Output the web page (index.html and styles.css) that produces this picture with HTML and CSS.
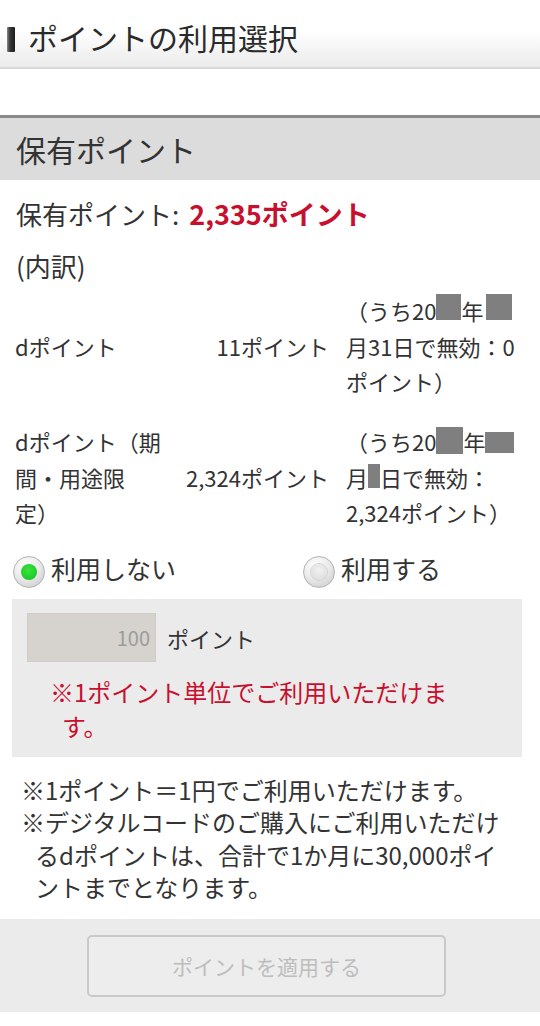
FILE: index.html
```html
<!DOCTYPE html>
<html lang="ja">
<head>
<meta charset="utf-8">
<title>ポイントの利用選択</title>
<link rel="stylesheet" href="styles.css">
</head>
<body>
<header class="hdr">
  <span class="hdr-bar"></span>
  <h1 class="hdr-title">ポイントの利用選択</h1>
</header>
<div class="spacer"></div>
<h2 class="sec-title">保有ポイント</h2>
<p class="total">保有ポイント:<span class="total-num">2,335ポイント</span></p>
<p class="breakdown">(内訳)</p>
<div class="ptable">
  <div class="prow">
    <div class="pname">dポイント</div>
    <div class="pval">11ポイント</div>
    <div class="pnote">（うち20<span class="mask m-a"></span>年<span class="mask m-b"></span>月31日で無効：0ポイント）</div>
  </div>
  <div class="prow">
    <div class="pname">dポイント（期間・用途限定）</div>
    <div class="pval">2,324ポイント</div>
    <div class="pnote">（うち20<span class="mask m-c"></span>年<span class="mask m-d"></span>月<span class="mask m-e"></span>日で無効：2,324ポイント）</div>
  </div>
</div>
<div class="radios">
  <label class="radio-opt"><span class="radio radio-on"></span><span class="radio-text">利用しない</span></label>
  <label class="radio-opt"><span class="radio radio-off"></span><span class="radio-text">利用する</span></label>
</div>
<div class="usebox">
  <div class="use-row">
    <span class="use-input">100</span>
    <span class="use-unit">ポイント</span>
  </div>
  <p class="use-note">※1ポイント単位でご利用いただけます。</p>
</div>
<div class="notes">
  <p class="note">※1ポイント＝1円でご利用いただけます。</p>
  <p class="note">※デジタルコードのご購入にご利用いただけるdポイントは、合計で1か月に30,000ポイントまでとなります。</p>
</div>
<div class="btnbar">
  <button class="apply-btn" type="button" disabled>ポイントを適用する</button>
</div>
</body>
</html>
```
FILE: styles.css
```css
* { box-sizing: border-box; }
html, body { margin: 0; padding: 0; }
body {
  font-family: "Noto Sans CJK JP", "Noto Sans", sans-serif;
  color: #333;
  background: #fff;
  width: 540px;
}
p, h1, h2 { margin: 0; font-weight: normal; }

/* header */
.hdr {
  height: 69px;
  padding: 7px 0 0 7px;
  display: flex;
  align-items: center;
  background: linear-gradient(to bottom, #ffffff 0%, #ffffff 45%, #ebebeb 100%);
  border-bottom: 2px solid #d9d9d9;
}
.hdr-bar {
  width: 8px;
  height: 25px;
  margin: 4px 13px 0 0;
  border-radius: 1px;
  background: linear-gradient(90deg, #8a8a8a 0%, #3a3a3a 35%, #1c1c1c 100%);
}
.hdr-title {
  font-size: 30px;
  line-height: 40px;
  color: #2a2a2a;
}
.spacer { height: 46px; }

/* section title */
.sec-title {
  border-top: 3px solid #8a8a8a;
  background: #dcdcdc;
  height: 65px;
  padding-left: 16px;
  font-size: 30px;
  line-height: 62px;
  color: #333;
}

.total {
  margin-top: 8px;
  padding-left: 16px;
  font-size: 26px;
  line-height: 52px;
}
.total-num {
  margin-left: 10px;
  color: #c8102e;
  font-weight: bold;
  font-size: 27px;
}
.breakdown {
  padding-left: 16px;
  font-size: 26px;
  line-height: 52px;
}

/* breakdown table */
.ptable {
  margin-top: 1px;
  padding: 0 15px;
  display: flex;
  flex-direction: column;
  gap: 24.5px;
  font-size: 22px;
  line-height: 35.5px;
  text-spacing-trim: space-all;
}
.prow {
  display: grid;
  grid-template-columns: 150px 164px 196px;
  align-items: center;
}
.pval { text-align: right; }
.pnote { padding-left: 17px; }
.mask {
  display: inline-block;
  background: #7f7f7f;
}
.m-a { width: 25px; height: 26px; }
.m-b { width: 26px; height: 26px; margin-left: 3px; }
.m-c { width: 27px; height: 27px; vertical-align: -3px; }
.m-d { width: 29px; height: 21px; vertical-align: -1.6px; }
.m-e { width: 12px; height: 24px; vertical-align: -1.6px; }

/* radios */
.radios {
  margin-top: 21.5px;
  padding-left: 13px;
  display: grid;
  grid-template-columns: 290px 1fr;
  height: 36px;
}
.radio-opt {
  display: flex;
  align-items: flex-start;
}
.radio {
  width: 32px;
  height: 32px;
  margin-top: 4px;
  margin-right: 6px;
  border-radius: 50%;
  border: 1px solid #b4b4b4;
  background: radial-gradient(circle at 40% 30%, #ffffff 0%, #ececec 45%, #c4c4c4 100%);
  display: flex;
  align-items: center;
  justify-content: center;
  flex: none;
}
.radio::after {
  content: "";
  width: 16px;
  height: 16px;
  border-radius: 50%;
}
.radio-on::after {
  background: radial-gradient(circle at 45% 40%, #3fe23f 0%, #1fcf2a 60%, #17a81f 100%);
}
.radio-off::after {
  background: radial-gradient(circle at 50% 40%, #f2f2f2 0%, #e0e0e0 70%, #cfcfcf 100%);
  box-shadow: 0 0 0 1px #d2d2d2;
}
.radio-text {
  font-size: 25px;
  line-height: 33px;
  color: #333;
}

/* use box */
.usebox {
  margin: 11px 18px 0 12px;
  padding: 14px 15px 14px;
  background: #ebebeb;
}
.use-row {
  display: flex;
  align-items: center;
}
.use-input {
  width: 129px;
  height: 49px;
  padding-right: 5px;
  background: #d6d3ce;
  border: 1px solid #d0cdc8;
  color: #9c9c9c;
  font-size: 20px;
  line-height: 47px;
  text-align: right;
}
.use-unit {
  margin-left: 11px;
  font-size: 22px;
  line-height: 30px;
}
.use-note {
  margin: 13px 47px 0 0;
  padding-left: 35px;
  text-indent: -12px;
  font-size: 24px;
  line-height: 34px;
  color: #c8102e;
}

/* notes */
.notes {
  margin-top: 16.5px;
  padding: 0 30px 0 21px;
  font-size: 24px;
  line-height: 32.5px;
  color: #333;
}
.note {
  padding-left: 14px;
  text-indent: -14px;
}

/* button bar */
.btnbar {
  margin-top: 15.5px;
  padding: 16px 0 15px 87px;
  background: #ebebeb;
}
.apply-btn {
  display: block;
  width: 359px;
  height: 62px;
  border: 2px solid #c9c9c9;
  border-radius: 5px;
  background: #ededed;
  color: #bdbdbd;
  font-family: "Noto Sans CJK JP", "Noto Sans", sans-serif;
  font-size: 21px;
  padding: 0;
}
```
